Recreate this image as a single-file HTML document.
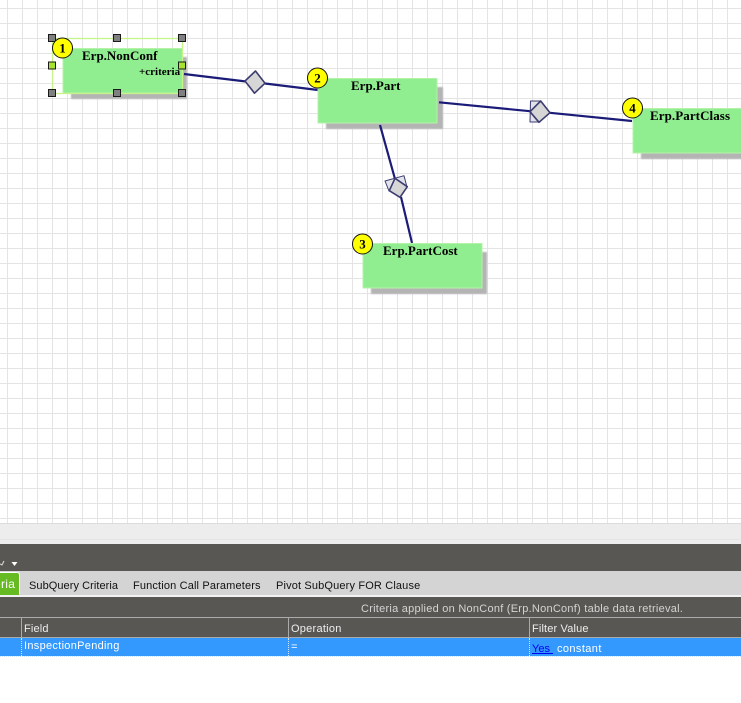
<!DOCTYPE html>
<html><head><meta charset="utf-8">
<style>
html,body{margin:0;padding:0;background:#fff;width:741px;height:703px;overflow:hidden}
body{position:relative;font-family:"Liberation Sans",sans-serif;font-size:11px}
svg{position:absolute;left:0;top:0}
.a{position:absolute}
.t{position:absolute;white-space:nowrap;letter-spacing:.15px;line-height:14px}
</style></head><body>
<svg width="741" height="524" viewBox="0 0 741 524">
<defs>
<pattern id="g" x="0" y="0" width="15" height="15" patternUnits="userSpaceOnUse">
<rect x="7" y="0" width="1" height="15" fill="#e4e4e4"/>
<rect x="0" y="8" width="15" height="1" fill="#e4e4e4"/>
</pattern>
<filter id="b" x="-10%" y="-10%" width="120%" height="120%"><feGaussianBlur stdDeviation=".8"/></filter>
</defs>
<rect width="741" height="524" fill="url(#g)"/>
<rect x="71" y="57" width="116" height="42" fill="#b4b4b4" filter="url(#b)"/>
<rect x="326" y="87" width="117" height="42" fill="#b4b4b4" filter="url(#b)"/>
<rect x="371" y="252" width="116" height="42" fill="#b4b4b4" filter="url(#b)"/>
<rect x="641" y="117" width="110" height="42" fill="#b4b4b4" filter="url(#b)"/>
<g stroke="#1b1b78" stroke-width="2.2" fill="none">
<line x1="184" y1="74" x2="246" y2="81.5"/><line x1="265" y1="83.5" x2="318" y2="90"/>
<line x1="439" y1="102.3" x2="530" y2="111.2"/><line x1="550" y1="112.8" x2="632" y2="121"/>
<line x1="380" y1="125" x2="395" y2="179"/><line x1="401" y1="197" x2="412" y2="243"/>
</g>
<g stroke="#3c3c70" stroke-width="1.6" stroke-linejoin="round">
<polygon points="245,81 255.5,71 265,83.2 254.5,93.2" fill="#d6d6d6"/>
<polygon points="530.5,101 541,101 540,122 530,122" fill="#e2e2ea" stroke-width="1"/>
<polygon points="530,111.7 540.7,101 550,112.7 539,122.3" fill="#d6d6d6"/>
<polygon points="385,181 404,175.7 407,187 389,191" fill="#e2e2ea" stroke-width="1"/>
<polygon points="395,178.3 407.3,186.7 400,197.3 389.3,190.7" fill="#d6d6d6"/>
</g>
<g fill="#90ee90" stroke="#b4f2a8" stroke-width="1">
<rect x="63" y="48.5" width="119.5" height="44.5"/>
<rect x="318" y="78.5" width="119" height="44.5"/>
<rect x="363" y="243.5" width="119" height="44.5"/>
<rect x="633" y="108.5" width="120" height="44.5"/>
</g>
<rect x="52.5" y="38.5" width="130" height="55" fill="none" stroke="#c6f48a" stroke-width="1.3"/>
<g fill="#808080" stroke="#1a1a1a" stroke-width="1">
<rect x="48.5" y="34.5" width="7" height="7"/><rect x="113.5" y="34.5" width="7" height="7"/><rect x="178.5" y="34.5" width="7" height="7"/>
<rect x="48.5" y="89.5" width="7" height="7"/><rect x="113.5" y="89.5" width="7" height="7"/><rect x="178.5" y="89.5" width="7" height="7"/>
</g>
<g fill="#a6e22e" stroke="#1a1a1a" stroke-width="1">
<rect x="48.5" y="62" width="7" height="7"/><rect x="178.5" y="62" width="7" height="7"/>
</g>
<g fill="#ffff00" stroke="#111" stroke-width="1">
<circle cx="62.5" cy="48" r="10"/><circle cx="317.5" cy="78" r="10"/><circle cx="362.5" cy="244" r="10"/><circle cx="632.5" cy="108" r="10"/>
</g>
<g font-family="'Liberation Serif',serif" font-weight="bold" font-size="13" fill="#000">
<text x="62.5" y="52.5" text-anchor="middle">1</text>
<text x="317.5" y="82.5" text-anchor="middle">2</text>
<text x="362.5" y="248.5" text-anchor="middle">3</text>
<text x="632.5" y="112.5" text-anchor="middle">4</text>
<text x="82" y="60">Erp.NonConf</text>
<text x="351" y="90">Erp.Part</text>
<text x="383" y="255">Erp.PartCost</text>
<text x="650" y="120" textLength="80">Erp.PartClass</text>
<text x="139" y="75" font-size="11">+criteria</text>
</g>
</svg>
<div class="a" style="left:0;top:523px;width:741px;height:1px;background:#dcdcdc"></div>
<div class="a" style="left:0;top:524px;width:741px;height:20px;background:#ededed"></div>
<div class="a" style="left:0;top:539px;width:741px;height:1px;background:#e4e4e4"></div>
<div class="a" style="left:0;top:544px;width:741px;height:27px;background:#595753"></div>
<div class="a" style="left:0;top:571px;width:741px;height:24px;background:#d4d4d4"></div>
<div class="a" style="left:0;top:595px;width:741px;height:2px;background:#f2f2f2"></div>
<div class="a" style="left:0;top:597px;width:741px;height:41px;background:#595753"></div>
<div class="a" style="left:0;top:617px;width:741px;height:1px;background:#aaa"></div>
<div class="a" style="left:0;top:638px;width:741px;height:18px;background:#3399ff"></div>
<div class="a" style="left:0;top:637px;width:741px;height:1px;background:#aaa"></div>
<div class="a" style="left:0;top:656px;width:741px;height:1px;border-top:1px dotted #cfe6ff;box-sizing:border-box"></div>
<div class="a" style="left:21px;top:617px;width:1px;height:21px;background:#aaa"></div>
<div class="a" style="left:288px;top:617px;width:1px;height:21px;background:#aaa"></div>
<div class="a" style="left:529px;top:617px;width:1px;height:21px;background:#aaa"></div>
<div class="a" style="left:21px;top:638px;height:18px;border-left:1px dotted #cfe6ff"></div>
<div class="a" style="left:288px;top:638px;height:18px;border-left:1px dotted #cfe6ff"></div>
<div class="a" style="left:529px;top:638px;height:18px;border-left:1px dotted #cfe6ff"></div>
<svg width="741" height="703" viewBox="0 0 741 703" style="pointer-events:none">
<polygon points="11.5,562 17.5,562 14.5,566" fill="#fff"/>
<path d="M0 564 L2 565 L4 561" stroke="#ddd" stroke-width="1" fill="none"/>
</svg>
<div class="a" style="left:-6px;top:572px;width:26px;height:23px;background:#66bb22;border:1px solid #66bb22;border-top:1px solid #fff;border-right:1px solid #fff;border-radius:0 3px 0 0;box-sizing:border-box"></div>
<div class="t" style="left:-6px;top:577px;color:#fff;font-size:12px;letter-spacing:.3px">eria</div>
<div class="t" style="left:29px;top:579px;color:#111;letter-spacing:.06px">SubQuery Criteria</div>
<div class="t" style="left:133px;top:579px;color:#111">Function Call Parameters</div>
<div class="t" style="left:276px;top:579px;color:#111">Pivot SubQuery FOR Clause</div>
<div class="t" style="left:361px;top:602px;color:#d4d4d4;letter-spacing:.25px">Criteria applied on NonConf (Erp.NonConf) table data retrieval.</div>
<div class="t" style="left:24px;top:622px;color:#eee">Field</div>
<div class="t" style="left:291px;top:622px;color:#eee;letter-spacing:.25px">Operation</div>
<div class="t" style="left:532px;top:622px;color:#eee">Filter Value</div>
<div class="t" style="left:24px;top:639px;color:#fff;letter-spacing:.3px">InspectionPending</div>
<div class="t" style="left:291px;top:640px;color:#fff">=</div>
<div class="t" style="left:532px;top:642px;color:#0000ee;text-decoration:underline;letter-spacing:0">Yes&nbsp;</div>
<div class="t" style="left:557px;top:642px;color:#fff;letter-spacing:.4px">constant</div>
</body></html>
